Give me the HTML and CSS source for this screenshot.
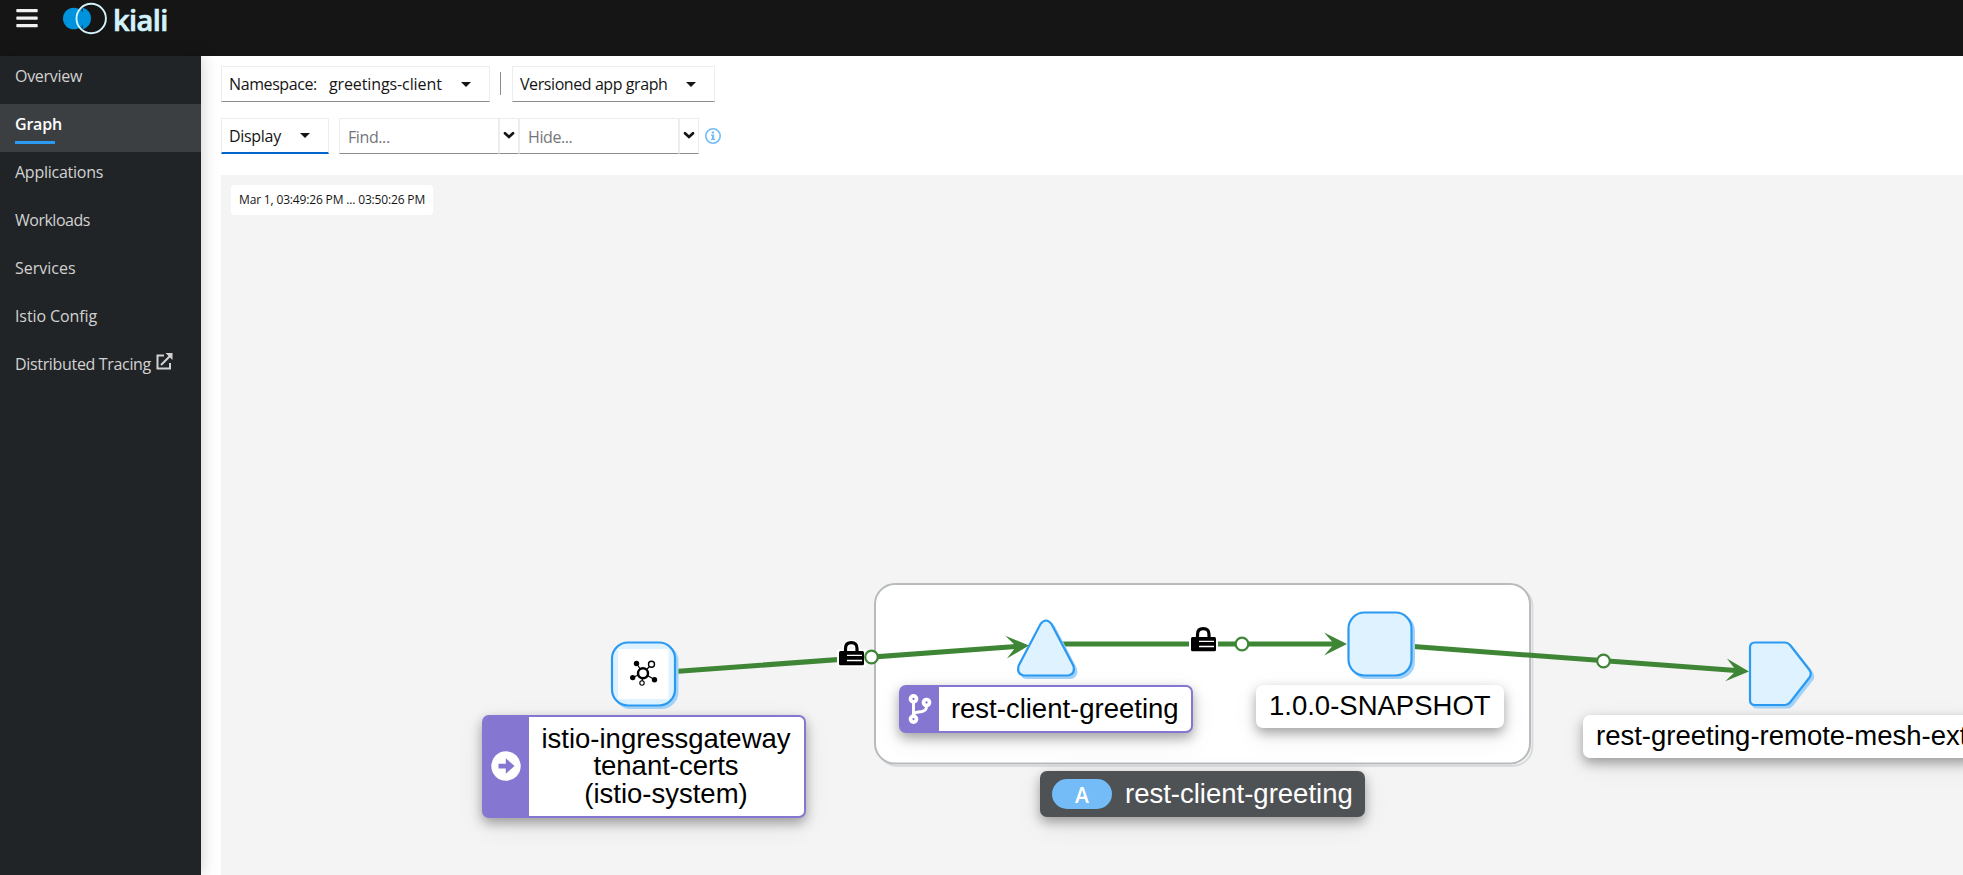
FILE: index.html
```
<!DOCTYPE html>
<html lang="en">
<head>
<meta charset="utf-8">
<title>Kiali</title>
<link rel="stylesheet" href="styles.css">
</head>
<body>
<div class="page">
  <header class="masthead">
    <svg class="burger" width="22" height="20" viewBox="0 0 22 20"><path d="M1 0h20a.7.7 0 0 1 .7.700v1.800a.7.7 0 0 1-.7.700H1a.7.7 0 0 1-.7-.700V.700A.7.7 0 0 1 1 0zM1 7.500h20a.7.7 0 0 1 .7.700v1.800a.7.7 0 0 1-.7.700H1a.7.7 0 0 1-.7-.700V8.200A.7.7 0 0 1 1 7.500zM1 15h20a.7.7 0 0 1 .7.700v1.800a.7.7 0 0 1-.7.700H1a.7.7 0 0 1-.7-.700v-1.800A.7.7 0 0 1 1 15z"/></svg>
    <div class="brand">
      <svg width="46" height="36" viewBox="0 0 46 36">
        <circle cx="10.800" cy="18.500" r="10.800" fill="#0093dd"/>
        <path d="M19.500 7.500q8.500 3 8.500 11t-8.500 11z" fill="#0093dd"/>
        <path d="M18.500 8q-9 10.500 0 21z" fill="#0093dd"/>
        <circle cx="28.200" cy="18.500" r="14.700" fill="none" stroke="#d2f3fb" stroke-width="1.900"/>
      </svg>
      <span class="brand-name">kiali</span>
    </div>
  </header>
  <div class="body">
    <nav class="sidebar">
      <a class="nav-item n1">Overview</a>
      <a class="nav-item n2 active">Graph</a>
      <a class="nav-item n3">Applications</a>
      <a class="nav-item n4">Workloads</a>
      <a class="nav-item n5">Services</a>
      <a class="nav-item n6">Istio Config</a>
      <a class="nav-item n7">Distributed Tracing
        <svg class="ext" width="17" height="17" viewBox="0 0 17 17"><path d="M8 2.500H1.500v13h12.500V10M5 12 14 3" fill="none" stroke="#d2d2d2" stroke-width="2"/><path d="M9.500 0H16.500V7z" fill="#d2d2d2"/></svg>
      </a>
    </nav>
    <main class="main">
      <div class="toolbar">
        <div class="row">
          <button class="select ns"><span class="t-ns">Namespace:</span><span class="t-gc">greetings-client</span><i class="caret"></i></button>
          <span class="divider"></span>
          <button class="select type"><span class="t-va">Versioned app graph</span><i class="caret"></i></button>
        </div>
        <div class="row second">
          <button class="select display"><span class="t-di">Display</span><i class="caret"></i></button>
          <div class="field find">Find...</div>
          <div class="chev"><svg width="12" height="9" viewBox="0 0 12 9"><path d="M2 2.200 6 6 10 2.200" fill="none" stroke="#151515" stroke-width="2.700" stroke-linecap="round"/></svg></div>
          <div class="field hide">Hide...</div>
          <div class="chev"><svg width="12" height="9" viewBox="0 0 12 9"><path d="M2 2.200 6 6 10 2.200" fill="none" stroke="#151515" stroke-width="2.700" stroke-linecap="round"/></svg></div>
          <svg class="info" width="16" height="16" viewBox="0 0 16 16"><circle cx="8" cy="8" r="7.200" fill="none" stroke="#73bcf7" stroke-width="1.600"/><path d="M6.800 3.500h2.300v2H6.800zM6 6.500h3.200v4.200H10V12H6v-1.300h.900V7.800H6z" fill="#73bcf7"/></svg>
        </div>
      </div>
      <section class="canvas">
        <div class="stamp">Mar 1, 03:49:26 PM ... 03:50:26 PM</div>
        <svg class="edges" width="1742" height="700" viewBox="221 175 1742 700">
          <defs>
            <path id="tip" d="M0 0 -23 -11.500 -15 -2.500V2.500L-23 11.500z"/>
            <g id="lock">
              <path d="M6.500 11V7.500Q6.500 1.700 12.300 1.700T18 7.500V11" fill="none" stroke="#fff" stroke-width="6"/>
              <rect x="-2" y="8.500" width="29" height="17.500" fill="#fff"/>
              <path d="M6.500 11V7.500Q6.500 1.700 12.300 1.700T18 7.500V11" fill="none" stroke="#000" stroke-width="3.200"/>
              <rect y="10" width="25" height="14.300" rx="1.500"/>
              <path d="M8 14.300h15M8 19.500h15" stroke="#fff" stroke-width="1.300"/>
            </g>
          </defs>
          <rect x="877.500" y="586.500" width="655" height="179.500" rx="20" fill="none" stroke="#d9dbdd" stroke-width="2"/>
          <rect x="875" y="584" width="655" height="179.500" rx="20" fill="#fff" stroke="#b8bbbe" stroke-width="2"/>
          <g stroke="#3e8635" stroke-width="5">
            <path d="M675 671.500 1016 646.500M1062 644H1333M1410 646.300 1736 670.500"/>
          </g>
          <g fill="#3e8635">
            <use href="#tip" transform="translate(1029 645.500) rotate(-4)"/>
            <use href="#tip" transform="translate(1347 644)"/>
            <use href="#tip" transform="translate(1749 671.500) rotate(4)"/>
          </g>
          <use href="#lock" x="839" y="641"/>
          <use href="#lock" x="1191" y="627"/>
          <g fill="#fff" stroke="#3e8635" stroke-width="2.200">
            <circle cx="871.500" cy="657" r="6.300"/><circle cx="1242" cy="644" r="6.300"/><circle cx="1603.500" cy="661" r="6.300"/>
          </g>
          <g fill="#a5d3f8" stroke="#a5d3f8" stroke-width="2" transform="translate(2.500 2.500)">
            <rect x="612" y="642.500" width="63" height="63" rx="16"/>
            <rect x="1348.500" y="612.500" width="63" height="63" rx="16"/>
            <path d="M1040.500 624q5.500-7 11 0L1073.500 666q2 8-5 9.500H1023.500q-7-1.500-5-9.500z"/>
            <path d="M1755 642.500H1785q3 0 5 2.500L1809.500 670q2.500 4 0 7.500L1790 702.500q-2 2.500-5 2.500H1755q-5 0-5-5V647.500q0-5 5-5z"/>
          </g>
          <g fill="#def3ff" stroke="#2b9af3" stroke-width="2.200">
            <rect x="612" y="642.500" width="63" height="63" rx="16"/>
            <rect x="1348.500" y="612.500" width="63" height="63" rx="16"/>
            <path d="M1040.500 624q5.500-7 11 0L1073.500 666q2 8-5 9.500H1023.500q-7-1.500-5-9.500z"/>
            <path d="M1755 642.500H1785q3 0 5 2.500L1809.500 670q2.500 4 0 7.500L1790 702.500q-2 2.500-5 2.500H1755q-5 0-5-5V647.500q0-5 5-5z"/>
          </g>
          <rect x="618" y="649" width="50.500" height="50" fill="#fff"/>
          <g stroke="#000" fill="none">
            <path d="M643 673 636.500 663.500M643 673 651.500 664.500M643 673 632.500 677.500M643 673 654.500 679.500M643 673 642 682" stroke-width="1.300"/>
            <circle cx="643" cy="673.300" r="5" stroke-width="2.500" fill="#fff"/>
            <circle cx="651.500" cy="664.300" r="3" stroke-width="1.400" fill="#fff"/>
            <circle cx="642" cy="683" r="2.200" stroke-width="1.100" fill="#fff"/>
          </g>
          <circle cx="636.500" cy="663.500" r="2.700"/><circle cx="632.700" cy="677.600" r="2.700"/><circle cx="654.500" cy="679.700" r="2.700"/>
        </svg>
        <div class="label virtual ingress">
          <div class="badge"><svg width="30" height="30" viewBox="0 0 30 30"><circle cx="15" cy="15" r="14.700" fill="#fff"/><path d="M7.500 12.700H14.800V7.200L23.500 15 14.800 22.800V17.500H7.500z" fill="#8476d1"/></svg></div>
          <div class="label-text"><span>istio-ingressgateway</span><span>tenant-certs</span><span>(istio-system)</span></div>
        </div>
        <div class="label virtual client">
          <div class="badge"><svg width="24" height="30" viewBox="0 0 24 30"><g fill="none" stroke="#fff"><circle cx="5.500" cy="4.900" r="3" stroke-width="3.700"/><circle cx="5.500" cy="25.100" r="3" stroke-width="3.700"/><circle cx="18.500" cy="8.500" r="3" stroke-width="3.700"/><path d="M5.500 9V22M18.500 12.500Q18.500 16.500 14 17.500L9 18.200Q5.500 18.800 5.500 21" stroke-width="2.900"/></g></svg></div>
          <div class="label-text">rest-client-greeting</div>
        </div>
        <div class="label plain snapshot">1.0.0-SNAPSHOT</div>
        <div class="label plain remote">rest-greeting-remote-mesh-ext</div>
        <div class="label app"><span class="pill">A</span><span>rest-client-greeting</span></div>
      </section>
    </main>
  </div>
</div>
</body>
</html>
```
FILE: styles.css
```
* { box-sizing: border-box; }
body { margin: 0; overflow: hidden; font: 16px/24px "Open Sans", "Noto Sans", sans-serif; color: #151515; background: #fff; }
.page { height: 875px; display: flex; flex-direction: column; }
.masthead { height: 56px; background: #151515; display: flex; align-items: flex-start; flex: none; }
.burger { margin: 9px 0 0 16px; fill: #f0f0f0; }
.brand { display: flex; margin-left: 25px; color: #d2f3fb; }
.brand-name { font: 600 29px/40px "Open Sans", sans-serif; letter-spacing: -.6px; -webkit-text-stroke: .7px #d2f3fb; margin-left: 4px; }
.body { flex: 1; display: flex; min-height: 0; }
.sidebar { width: 201px; flex: none; background: #212427; box-shadow: 0 0 16px rgba(3, 3, 3, .2); display: flex; flex-direction: column; }
.nav-item { height: 48px; padding: 8px 0 0 15px; color: #d2d2d2; white-space: nowrap; display: flex; }
.nav-item.active { background: #3c3f42; color: #fff; font-weight: 600; position: relative; }
.active::after { content: ""; position: absolute; left: 15px; top: 37px; width: 40px; height: 3px; background: #2b9af3; }
.n1 { letter-spacing: -.3px; }
.n2 { letter-spacing: -.2px; }
.n3 { letter-spacing: -.25px; }
.n4 { letter-spacing: -.5px; }
.n6 { letter-spacing: -.1px; }
.n7 { letter-spacing: -.33px; }
.ext { margin: 1px 0 0 5px; }
.main { flex: 1; min-width: 0; padding: 10px 0 0 20px; display: flex; flex-direction: column; }
.toolbar { height: 109px; flex: none; }
.row { display: flex; height: 36px; }
.second { margin-top: 16px; }
.select, .field, .chev { height: 36px; background: #fff; border: 1px solid #ededed; border-bottom-color: #8a8d90; }
.select { font: inherit; color: inherit; padding: 0 18px 0 7px; display: flex; align-items: center; white-space: nowrap; }
.ns { width: 269px; }
.t-ns { letter-spacing: -.4px; }
.t-gc { margin-left: 12px; letter-spacing: -.1px; }
.t-va { letter-spacing: -.42px; }
.t-di { letter-spacing: -.3px; }
.caret { margin-left: auto; border: 5px solid transparent; border-top-color: #151515; border-bottom: 0; }
.divider { width: 1px; height: 23px; background: #8a8d90; margin: 6px 11px 0 10px; }
.type { width: 203px; }
.display { width: 108px; border-bottom: 2px solid #06c; }
.field { width: 160px; padding: 6px 8px; color: #737679; letter-spacing: -.4px; }
.find { margin-left: 10px; }
.chev { width: 20px; display: flex; justify-content: center; padding-top: 12px; }
.info { margin: 10px 0 0 6px; }
.canvas { flex: 1; position: relative; overflow: hidden; background: #f4f4f4; padding: 10px; }
.stamp { width: 202px; height: 30px; background: #fff; border-radius: 3px; padding: 3px 8px; font-size: 12px; letter-spacing: -.16px; white-space: nowrap; }
.edges { position: absolute; left: 0; top: 0; }
.label { position: absolute; display: flex; white-space: nowrap; font: 27.500px/27.500px "Liberation Sans", Arial, sans-serif; color: #000; background: #fff; border-radius: 7px; box-shadow: 0 5px 12px rgba(0, 0, 0, .33), 0 8px 28px rgba(0, 0, 0, .07); }
.virtual { border: 2px solid #8476d1; }
.badge { background: #8476d1; display: flex; align-items: center; justify-content: center; flex: none; border-radius: 4px 0 0 4px; }
.label-text { flex: 1; display: flex; flex-direction: column; align-items: center; justify-content: center; }
.ingress { left: 260.500px; top: 540px; width: 324.500px; height: 102.500px; }
.ingress .badge { width: 45.500px; }
.ingress .label-text { padding: 0 1px .5px 0; }
.client { left: 677.500px; top: 510px; width: 294.500px; height: 48px; }
.client .badge { width: 38px; }
.plain { height: 43px; line-height: 42px; padding-left: 13px; }
.snapshot { left: 1035px; top: 510px; width: 248px; }
.remote { left: 1362px; top: 540px; width: 400px; }
.app { left: 818.500px; top: 596px; width: 325.500px; height: 46px; background: #4f5255; color: #fff; line-height: 48px; padding-left: 12.500px; gap: 13px; align-items: center; }
.pill { width: 60px; height: 30px; border-radius: 15px; background: #73bcf7; font: 600 21px/32px "Open Sans", sans-serif; text-align: center; }
```
